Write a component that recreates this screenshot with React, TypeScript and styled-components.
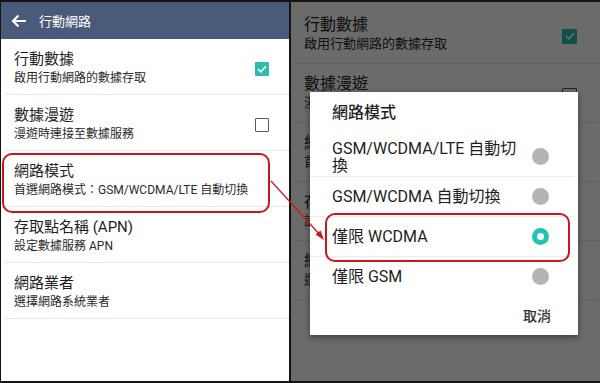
import React from "react";
import styled, { createGlobalStyle } from "styled-components";

const Global = createGlobalStyle`
  html, body { margin: 0; padding: 0; background: #111; }
  body { font-family: Roboto, "Noto Sans CJK TC", "Noto Sans", sans-serif; }
`;

const Stage = styled.div`
  position: relative;
  width: 600px;
  height: 383px;
  box-sizing: border-box;
  padding: 2px 0 2px 1px;
  background: #141414;
  display: flex;
  gap: 2px;
  overflow: hidden;
`;

const LeftPanel = styled.div`
  width: 288px;
  background: #fff;
  display: flex;
  flex-direction: column;
`;

const Header = styled.div`
  height: 37px;
  background: #4a5a7a;
  display: flex;
  align-items: center;
  padding-left: 10px;
  gap: 12px;
  color: #fff;
  font-size: 13px;
`;

const HeaderTitle = styled.span`
  line-height: 1;
  padding-top: 1px;
`;

const RightPanel = styled.div`
  position: relative;
  flex: 1;
  background: #fff;
  padding-top: 3px;
`;

const Row = styled.div<{ $big?: boolean }>`
  display: flex;
  align-items: center;
  box-sizing: border-box;
  height: ${(p) => (p.$big ? 59 : 56)}px;
  padding: 0 ${(p) => (p.$big ? 23 : 20)}px 0 ${(p) => (p.$big ? 13 : 13)}px;
  margin-left: 3px;
  border-bottom: 1px solid #e8e8e8;
`;

const RowText = styled.div<{ $big?: boolean }>`
  flex: 1;
  display: flex;
  flex-direction: column;
  margin-left: -3px;
  margin-top: ${(p) => (p.$big ? -2 : 2)}px;
`;

const RowTitle = styled.div<{ $big?: boolean }>`
  font-size: ${(p) => (p.$big ? 16 : 15)}px;
  line-height: ${(p) => (p.$big ? 20 : 21)}px;
  color: #1e1e1e;
`;

const RowSub = styled.div<{ $big?: boolean }>`
  font-size: ${(p) => (p.$big ? 13 : 12)}px;
  line-height: ${(p) => (p.$big ? 17 : 17)}px;
  color: #2a2a2a;
`;

const Check = styled.div<{ $on?: boolean; $big?: boolean }>`
  width: ${(p) => (p.$big ? 15 : 14)}px;
  height: ${(p) => (p.$big ? 15 : 14)}px;
  box-sizing: border-box;
  border-radius: 1px;
  background: ${(p) => (p.$on ? "#2bbcae" : "transparent")};
  border: ${(p) => (p.$on ? "none" : "1.5px solid #5a5a5a")};
  display: flex;
  align-items: center;
  justify-content: center;
  margin-top: 4px;
`;

const Dim = styled.div`
  position: absolute;
  inset: 0;
  background: rgba(0, 0, 0, 0.58);
`;

const Dialog = styled.div`
  position: absolute;
  left: 19px;
  top: 90px;
  width: 268px;
  height: 243px;
  background: #fff;
  box-shadow: 0 2px 6px rgba(0, 0, 0, 0.45);
  display: flex;
  flex-direction: column;
`;

const DialogTitle = styled.div`
  font-size: 16px;
  font-weight: 500;
  color: #1e1e1e;
  line-height: 22px;
  padding: 10px 22px 13px;
`;

const Option = styled.div<{ $last?: boolean }>`
  height: 39px;
  display: flex;
  align-items: center;
  padding: 0 25px 0 22px;
  border-bottom: ${(p) => (p.$last ? "none" : "1px solid #ececec")};
  margin-right: 4px;
`;

const OptionText = styled.div`
  flex: 1;
  font-size: 16px;
  line-height: 17px;
  color: #1e1e1e;
`;

const Radio = styled.div<{ $on?: boolean }>`
  width: 17px;
  height: 17px;
  border-radius: 50%;
  background: ${(p) => (p.$on ? "#22c3b2" : "#b4b4b4")};
  display: flex;
  align-items: center;
  justify-content: center;
  &::after {
    content: "";
    display: ${(p) => (p.$on ? "block" : "none")};
    width: 7px;
    height: 7px;
    border-radius: 50%;
    background: #fff;
  }
`;

const Buttons = styled.div`
  flex: 1;
  display: flex;
  justify-content: flex-end;
  align-items: center;
  padding: 0 27px 2px 0;
`;

const CancelButton = styled.span`
  font-size: 14px;
  font-weight: 500;
  color: #333;
`;

const Highlight = styled.div<{ $l: number; $t: number; $w: number; $h: number }>`
  position: absolute;
  left: ${(p) => p.$l}px;
  top: ${(p) => p.$t}px;
  width: ${(p) => p.$w}px;
  height: ${(p) => p.$h}px;
  box-sizing: border-box;
  border: 2px solid #c8161d;
  border-radius: 10px;
  pointer-events: none;
`;

const ArrowLayer = styled.svg`
  position: absolute;
  left: 0;
  top: 0;
  width: 600px;
  height: 383px;
  pointer-events: none;
`;

type Item = { title: string; sub: string; check?: "on" | "off" };

const items: Item[] = [
  { title: "行動數據", sub: "啟用行動網路的數據存取", check: "on" },
  { title: "數據漫遊", sub: "漫遊時連接至數據服務", check: "off" },
  { title: "網路模式", sub: "首選網路模式：GSM/WCDMA/LTE 自動切換" },
  { title: "存取點名稱 (APN)", sub: "設定數據服務 APN" },
  { title: "網路業者", sub: "選擇網路系統業者" },
];

const CheckMark = () => (
  <svg width="10" height="8" viewBox="0 0 10 8">
    <path d="M1 4.2 L3.8 6.8 L9 1.2" fill="none" stroke="#fff" strokeWidth="1.6" />
  </svg>
);

const SettingsList = ({ big }: { big?: boolean }) => (
  <>
    {items.map((it) => (
      <Row key={it.title} $big={big}>
        <RowText $big={big}>
          <RowTitle $big={big}>{it.title}</RowTitle>
          <RowSub $big={big}>{it.sub}</RowSub>
        </RowText>
        {it.check && (
          <Check $on={it.check === "on"} $big={big}>
            {it.check === "on" && <CheckMark />}
          </Check>
        )}
      </Row>
    ))}
  </>
);

export default function App() {
  return (
    <>
      <Global />
      <Stage>
        <LeftPanel>
          <Header>
            <svg width="16" height="14" viewBox="0 0 16 14">
              <path d="M15 7 H2 M7.5 1.5 L2 7 L7.5 12.5" fill="none" stroke="#fff" strokeWidth="2.2" />
            </svg>
            <HeaderTitle>行動網路</HeaderTitle>
          </Header>
          <SettingsList />
        </LeftPanel>
        <RightPanel>
          <SettingsList big />
          <Dim />
          <Dialog>
            <DialogTitle>網路模式</DialogTitle>
            <Option>
              <OptionText>
                GSM/WCDMA/LTE 自動切
                <br />換
              </OptionText>
              <Radio />
            </Option>
            <Option>
              <OptionText>GSM/WCDMA 自動切換</OptionText>
              <Radio />
            </Option>
            <Option>
              <OptionText>僅限 WCDMA</OptionText>
              <Radio $on />
            </Option>
            <Option $last>
              <OptionText>僅限 GSM</OptionText>
              <Radio />
            </Option>
            <Buttons>
              <CancelButton>取消</CancelButton>
            </Buttons>
          </Dialog>
        </RightPanel>
        <Highlight $l={2} $t={153} $w={268} $h={60} />
        <Highlight $l={325} $t={213} $w={245} $h={49} />
        <ArrowLayer viewBox="0 0 600 383">
          <line x1="271" y1="181" x2="321" y2="236" stroke="#c8161d" strokeWidth="1.2" />
          <path d="M324 240 L315.5 234.5 L320.5 230.5 Z" fill="#c8161d" />
        </ArrowLayer>
      </Stage>
    </>
  );
}
